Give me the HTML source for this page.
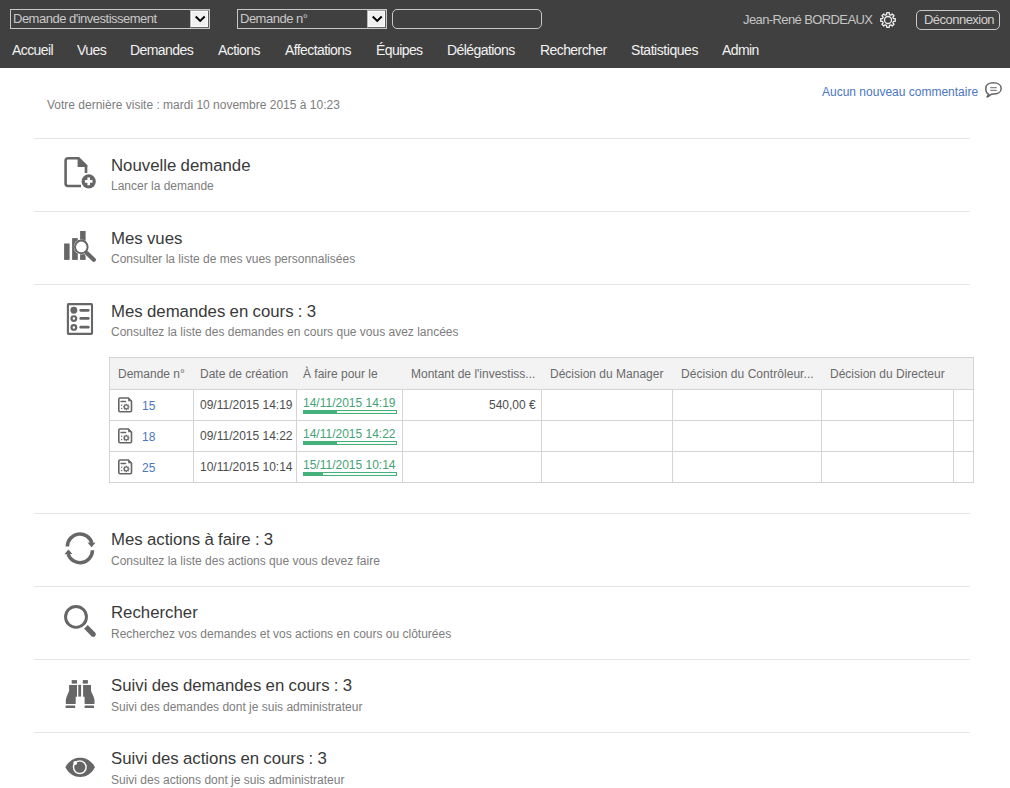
<!DOCTYPE html>
<html><head><meta charset="utf-8">
<style>
*{box-sizing:border-box;margin:0;padding:0}
html,body{width:1010px;height:788px;overflow:hidden;background:#fff;font-family:"Liberation Sans",sans-serif}
#hdr{position:absolute;left:0;top:0;width:1010px;height:68px;background:#404040}
.sel{position:absolute;top:9px;height:20px;border:1px solid #c8c8c8;color:#c8c8c8;font-size:13px;line-height:18px;padding-left:2px;white-space:nowrap;overflow:hidden;letter-spacing:-0.5px}
.sel .arr{position:absolute;right:0;top:0;width:19px;height:18px;border-style:solid;border-width:1px;border-color:#a0a0a0 #606060 #606060 #b8b8b8;background:#f0f0f0;box-shadow:inset 1px 1px #fafafa,inset -1px -1px #fafafa}
.sel .arr svg{position:absolute;left:3px;top:4px}
.inp{position:absolute;top:9px;height:20px;border:1px solid #c8c8c8;border-radius:5px}
.ab{position:absolute;white-space:nowrap}
#nav span{position:absolute;top:42px;color:#f2f2f2;font-size:14px;letter-spacing:-0.58px;white-space:nowrap}
.sep{position:absolute;left:34px;width:936px;height:1px;background:#e6e6e6}
.t{position:absolute;left:111px;font-size:16.8px;color:#393939;word-spacing:-0.4px;white-space:nowrap}
.s{position:absolute;left:111px;font-size:12px;color:#7d7d7d;white-space:nowrap}
.ico{position:absolute;left:60px;width:40px;height:40px}
.hl{position:absolute;left:110px;width:863px;height:1px;background:#d4d4d4}
.vl{position:absolute;top:389px;width:1px;height:93px;background:#d4d4d4}
.th{position:absolute;top:367px;font-size:12px;color:#6a6a6a;white-space:nowrap}
.td{position:absolute;font-size:12px;color:#4d4d4d;white-space:nowrap}
.lnk{color:#4a76c2}
.grn{color:#45a276}
.bar{position:absolute;left:303px;width:94px;height:4px;border:1px solid #42b27a;background:#f4fbf8}
.bar div{position:absolute;left:0;top:0;height:2px;background:#42b27a}
</style></head><body>
<div id="hdr">
  <div class="sel" style="left:10px;width:200px">Demande d'investissement<div class="arr"><svg width="12" height="8" viewBox="0 0 12 8"><path d="M1.7 1.5 L6.2 6 L10.7 1.5" fill="none" stroke="#000" stroke-width="1.9"/></svg></div></div>
  <div class="sel" style="left:237px;width:150px">Demande n°<div class="arr"><svg width="12" height="8" viewBox="0 0 12 8"><path d="M1.7 1.5 L6.2 6 L10.7 1.5" fill="none" stroke="#000" stroke-width="1.9"/></svg></div></div>
  <div class="inp" style="left:392px;width:150px"></div>
  <div class="ab" style="left:743px;top:12px;color:#c4c4c4;font-size:13px;letter-spacing:-0.6px">Jean-René BORDEAUX</div>
  <svg class="ab" style="left:878px;top:10px" width="20" height="20" viewBox="0 0 20 20"><path d="M15.41 8.56 L17.29 8.75 L17.29 11.25 L15.41 11.44 L14.84 12.81 L16.04 14.27 L14.27 16.04 L12.81 14.84 L11.44 15.41 L11.25 17.29 L8.75 17.29 L8.56 15.41 L7.19 14.84 L5.73 16.04 L3.96 14.27 L5.16 12.81 L4.59 11.44 L2.71 11.25 L2.71 8.75 L4.59 8.56 L5.16 7.19 L3.96 5.73 L5.73 3.96 L7.19 5.16 L8.56 4.59 L8.75 2.71 L11.25 2.71 L11.44 4.59 L12.81 5.16 L14.27 3.96 L16.04 5.73 L14.84 7.19Z" fill="none" stroke="#eee" stroke-width="1.3" stroke-linejoin="round"/><circle cx="10" cy="10" r="3.5" fill="none" stroke="#eee" stroke-width="1.3"/></svg>
  <div class="ab" style="left:916px;top:10px;width:84px;height:20px;border:1px solid #c8c8c8;border-radius:5px;color:#d0d0d0;font-size:13px;line-height:18px;padding-left:7px;letter-spacing:-0.53px">Déconnexion</div>
  <div id="nav">
    <span style="left:12px">Accueil</span>
    <span style="left:77px">Vues</span>
    <span style="left:130px">Demandes</span>
    <span style="left:218px">Actions</span>
    <span style="left:285px">Affectations</span>
    <span style="left:376px">Équipes</span>
    <span style="left:447px">Délégations</span>
    <span style="left:540px">Rechercher</span>
    <span style="left:631px;letter-spacing:-0.45px">Statistiques</span>
    <span style="left:722px">Admin</span>
  </div>
</div>
<div class="ab" style="left:47px;top:98px;font-size:12px;color:#7d7d7d">Votre dernière visite : mardi 10 novembre 2015 à 10:23</div>
<div class="ab" style="left:822px;top:85px;font-size:12px;color:#4a76c2">Aucun nouveau commentaire</div>
<svg class="ab" style="left:980px;top:78px" width="26" height="24" viewBox="0 0 26 24"><path d="M8.6 16.2 C6.2 15 5.8 13 5.8 10.4 C5.8 6.6 9.4 4.8 13.4 4.8 C17.6 4.8 21.2 6.8 21.2 10.4 C21.2 14 17.6 16 13.4 16 C12.2 16 11.4 16.1 10.6 16.6 C9.6 17.6 8.4 18.8 7.2 19 C6.8 19 7 18.6 7.4 18.2 C8 17.6 8.4 17 8.6 16.2Z" fill="none" stroke="#666" stroke-width="1.5" stroke-linejoin="round"/><path d="M10.2 9.6 H16.8 M10.2 12.3 H16.8" stroke="#888" stroke-width="1.2"/></svg>

<div class="sep" style="top:138px"></div>
<div class="t" style="top:156px">Nouvelle demande</div><div class="s" style="top:179px">Lancer la demande</div>
<div class="sep" style="top:211px"></div>
<div class="t" style="top:229px">Mes vues</div><div class="s" style="top:252px">Consulter la liste de mes vues personnalisées</div>
<div class="sep" style="top:284px"></div>
<div class="t" style="top:302px">Mes demandes en cours : 3</div><div class="s" style="top:325px">Consultez la liste des demandes en cours que vous avez lancées</div>


<div class="ab" style="left:109px;top:357px;width:865px;height:126px;border:1px solid #d4d4d4"></div>
<div class="ab" style="left:110px;top:358px;width:863px;height:31px;background:#f3f3f3"></div>
<div class="hl" style="top:389px"></div><div class="hl" style="top:420px"></div><div class="hl" style="top:451px"></div>
<div class="vl" style="left:193px"></div><div class="vl" style="left:296px"></div><div class="vl" style="left:402px"></div><div class="vl" style="left:541px"></div><div class="vl" style="left:672px"></div><div class="vl" style="left:821px"></div><div class="vl" style="left:953px"></div>
<div class="th" style="left:118px">Demande n°</div>
<div class="th" style="left:200px">Date de création</div>
<div class="th" style="left:303px">À faire pour le</div>
<div class="th" style="left:411px">Montant de l'investiss...</div>
<div class="th" style="left:550px">Décision du Manager</div>
<div class="th" style="left:681px;letter-spacing:0.05px">Décision du Contrôleur...</div>
<div class="th" style="left:830px">Décision du Directeur</div>
<svg class="ab" style="left:114px;top:393px" width="24" height="24" viewBox="0 0 24 24"><path d="M14.3 5 H6 A1.2 1.2 0 0 0 4.8 6.2 V17.6 A1.2 1.2 0 0 0 6 18.8 H16.3 A1.2 1.2 0 0 0 17.5 17.6 V8.2Z" fill="none" stroke="#666" stroke-width="1.6" stroke-linejoin="round"/><path d="M14.2 4.3 L18.2 8.3 L14.2 8.3Z" fill="#666"/><path d="M7 8.5 H11.6" stroke="#666" stroke-width="1.4" stroke-linecap="round"/><rect x="7" y="11.6" width="1.3" height="1.3" fill="#777"/><rect x="7" y="14.9" width="1.3" height="1.3" fill="#777"/><path d="M14.59 13.19 L15.53 13.24 L15.53 14.56 L14.59 14.61 L14.42 15.02 L15.05 15.72 L14.12 16.65 L13.42 16.02 L13.01 16.19 L12.96 17.13 L11.64 17.13 L11.59 16.19 L11.18 16.02 L10.48 16.65 L9.55 15.72 L10.18 15.02 L10.01 14.61 L9.07 14.56 L9.07 13.24 L10.01 13.19 L10.18 12.78 L9.55 12.08 L10.48 11.15 L11.18 11.78 L11.59 11.61 L11.64 10.67 L12.96 10.67 L13.01 11.61 L13.42 11.78 L14.12 11.15 L15.05 12.08 L14.42 12.78Z" fill="#666"/><circle cx="12.3" cy="13.9" r="1.3" fill="#fff"/></svg><svg class="ab" style="left:114px;top:424px" width="24" height="24" viewBox="0 0 24 24"><path d="M14.3 5 H6 A1.2 1.2 0 0 0 4.8 6.2 V17.6 A1.2 1.2 0 0 0 6 18.8 H16.3 A1.2 1.2 0 0 0 17.5 17.6 V8.2Z" fill="none" stroke="#666" stroke-width="1.6" stroke-linejoin="round"/><path d="M14.2 4.3 L18.2 8.3 L14.2 8.3Z" fill="#666"/><path d="M7 8.5 H11.6" stroke="#666" stroke-width="1.4" stroke-linecap="round"/><rect x="7" y="11.6" width="1.3" height="1.3" fill="#777"/><rect x="7" y="14.9" width="1.3" height="1.3" fill="#777"/><path d="M14.59 13.19 L15.53 13.24 L15.53 14.56 L14.59 14.61 L14.42 15.02 L15.05 15.72 L14.12 16.65 L13.42 16.02 L13.01 16.19 L12.96 17.13 L11.64 17.13 L11.59 16.19 L11.18 16.02 L10.48 16.65 L9.55 15.72 L10.18 15.02 L10.01 14.61 L9.07 14.56 L9.07 13.24 L10.01 13.19 L10.18 12.78 L9.55 12.08 L10.48 11.15 L11.18 11.78 L11.59 11.61 L11.64 10.67 L12.96 10.67 L13.01 11.61 L13.42 11.78 L14.12 11.15 L15.05 12.08 L14.42 12.78Z" fill="#666"/><circle cx="12.3" cy="13.9" r="1.3" fill="#fff"/></svg><svg class="ab" style="left:114px;top:455px" width="24" height="24" viewBox="0 0 24 24"><path d="M14.3 5 H6 A1.2 1.2 0 0 0 4.8 6.2 V17.6 A1.2 1.2 0 0 0 6 18.8 H16.3 A1.2 1.2 0 0 0 17.5 17.6 V8.2Z" fill="none" stroke="#666" stroke-width="1.6" stroke-linejoin="round"/><path d="M14.2 4.3 L18.2 8.3 L14.2 8.3Z" fill="#666"/><path d="M7 8.5 H11.6" stroke="#666" stroke-width="1.4" stroke-linecap="round"/><rect x="7" y="11.6" width="1.3" height="1.3" fill="#777"/><rect x="7" y="14.9" width="1.3" height="1.3" fill="#777"/><path d="M14.59 13.19 L15.53 13.24 L15.53 14.56 L14.59 14.61 L14.42 15.02 L15.05 15.72 L14.12 16.65 L13.42 16.02 L13.01 16.19 L12.96 17.13 L11.64 17.13 L11.59 16.19 L11.18 16.02 L10.48 16.65 L9.55 15.72 L10.18 15.02 L10.01 14.61 L9.07 14.56 L9.07 13.24 L10.01 13.19 L10.18 12.78 L9.55 12.08 L10.48 11.15 L11.18 11.78 L11.59 11.61 L11.64 10.67 L12.96 10.67 L13.01 11.61 L13.42 11.78 L14.12 11.15 L15.05 12.08 L14.42 12.78Z" fill="#666"/><circle cx="12.3" cy="13.9" r="1.3" fill="#fff"/></svg>
<div class="td lnk" style="left:142px;top:399px">15</div>
<div class="td lnk" style="left:142px;top:430px">18</div>
<div class="td lnk" style="left:142px;top:461px">25</div>
<div class="td" style="left:200px;top:398px">09/11/2015 14:19</div>
<div class="td" style="left:200px;top:429px">09/11/2015 14:22</div>
<div class="td" style="left:200px;top:460px">10/11/2015 10:14</div>
<div class="td grn" style="left:303px;top:396px">14/11/2015 14:19</div>
<div class="td grn" style="left:303px;top:427px">14/11/2015 14:22</div>
<div class="td grn" style="left:303px;top:458px">15/11/2015 10:14</div>
<div class="bar" style="top:410px"><div style="width:33px"></div></div>
<div class="bar" style="top:441px"><div style="width:33px"></div></div>
<div class="bar" style="top:472px"><div style="width:19px"></div></div>
<div class="td" style="left:489px;top:398px">540,00 €</div>

<div class="sep" style="top:513px"></div>
<div class="t" style="top:530px">Mes actions à faire : 3</div><div class="s" style="top:554px">Consultez la liste des actions que vous devez faire</div>
<div class="sep" style="top:586px"></div>
<div class="t" style="top:603px">Rechercher</div><div class="s" style="top:627px">Recherchez vos demandes et vos actions en cours ou clôturées</div>
<div class="sep" style="top:659px"></div>
<div class="t" style="top:676px">Suivi des demandes en cours : 3</div><div class="s" style="top:700px">Suivi des demandes dont je suis administrateur</div>
<div class="sep" style="top:732px"></div>
<div class="t" style="top:749px">Suivi des actions en cours : 3</div><div class="s" style="top:773px">Suivi des actions dont je suis administrateur</div>

<svg class="ico" style="top:152px" viewBox="0 0 40 40"><path d="M21 34 H8.1 A2.5 2.5 0 0 1 5.6 31.5 V8.8 A2.5 2.5 0 0 1 8.1 6.3 H18.3 L26 13.8 V21" fill="none" stroke="#666" stroke-width="2.6"/><path d="M17.6 5 H18.9 L27.3 13.4 V14.9 H17.6Z" fill="#666"/><circle cx="28.7" cy="29.4" r="8.4" fill="#fff"/><circle cx="28.7" cy="29.4" r="7.1" fill="#666"/><path d="M28.7 25.6 V33.2 M24.9 29.4 H32.5" stroke="#fff" stroke-width="2.6"/></svg>
<svg class="ico" style="top:225px" viewBox="0 0 40 40"><rect x="4.1" y="18.5" width="5.5" height="16.4" fill="#666"/><rect x="12.1" y="13.1" width="5.7" height="21.8" fill="#666"/><rect x="20.1" y="6" width="5.5" height="28.9" fill="#666"/><line x1="26.5" y1="27.8" x2="33" y2="34" stroke="#fff" stroke-width="5.6"/><circle cx="21.3" cy="21.9" r="7.5" fill="#fff"/><circle cx="21.3" cy="21.9" r="6.3" fill="#fff" stroke="#666" stroke-width="2"/><line x1="27" y1="28.2" x2="33.8" y2="34.8" stroke="#666" stroke-width="4.2" stroke-linecap="round"/></svg>
<svg class="ico" style="top:298px" viewBox="0 0 40 40"><rect x="7.9" y="6.1" width="24.1" height="29.8" rx="0.6" fill="none" stroke="#666" stroke-width="2.1"/><circle cx="13.85" cy="12.2" r="3.45" fill="#666"/><circle cx="13.85" cy="20.6" r="2.35" fill="none" stroke="#666" stroke-width="2.2"/><circle cx="13.85" cy="29.4" r="2.35" fill="none" stroke="#666" stroke-width="2.2"/><path d="M20.7 12.3 H28.3 M20.7 20.4 H28.3 M20.7 29.2 H28.3" stroke="#666" stroke-width="2.8" stroke-linecap="round"/></svg>
<svg class="ico" style="top:528px" viewBox="0 0 40 40"><path d="M7.4 18.4 A12.5 12.5 0 0 1 31.9 15" fill="none" stroke="#666" stroke-width="3.5"/><path d="M27.5 14.6 L35.5 14.8 L31.5 19.3Z" fill="#666"/><path d="M32.5 22.3 A12.5 12.5 0 0 1 8.1 26" fill="none" stroke="#666" stroke-width="3.5"/><path d="M4.4 26.2 L12.4 26 L8.4 21.6Z" fill="#666"/></svg>
<svg class="ico" style="top:600px" viewBox="0 0 40 40"><circle cx="16" cy="16.9" r="10.45" fill="none" stroke="#666" stroke-width="2.9"/><line x1="25.9" y1="26.9" x2="33.2" y2="34.2" stroke="#666" stroke-width="5.1"/><circle cx="33.2" cy="34.2" r="2.55" fill="#666"/></svg>
<svg class="ico" style="top:674px" viewBox="0 0 40 40"><rect x="11.7" y="6.1" width="5.3" height="3.5" fill="#666"/><rect x="22.8" y="6.1" width="5.1" height="3.5" fill="#666"/><path d="M9.1 10.9 H17 V22.8 H15.7 V30 H5.8 V26 C6.2 22 8.8 19 9.1 16.8Z" fill="#666"/><path d="M31 10.9 H23.1 V22.8 H24.6 V30 H34.5 V26 C34.1 22 31.3 19 31 16.8Z" fill="#666"/><rect x="18.3" y="10.9" width="2.8" height="11.7" fill="#666"/><rect x="5.6" y="31.5" width="9.6" height="2.5" rx="0.6" fill="#666"/><rect x="24.6" y="31.5" width="9.4" height="2.5" rx="0.6" fill="#666"/></svg>
<svg class="ico" style="top:747px" viewBox="0 0 40 40"><path d="M5.3 20.3 C9 13.5 14.5 10.7 20.15 10.7 C25.8 10.7 31.3 13.5 35 20.3 C31.3 27.1 25.8 30 20.15 30 C14.5 30 9 27.1 5.3 20.3Z" fill="#666"/><circle cx="19.8" cy="20.2" r="6.3" fill="none" stroke="#fff" stroke-width="1.4"/><circle cx="15.2" cy="16" r="1.9" fill="#fff"/></svg>
</body></html>
